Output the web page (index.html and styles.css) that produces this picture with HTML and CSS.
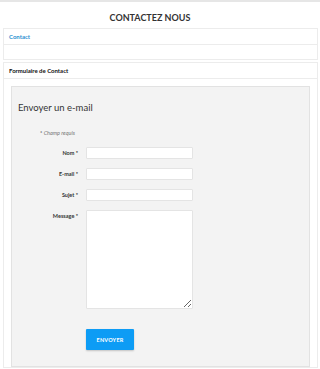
FILE: index.html
```html
<!DOCTYPE html>
<html lang="fr">
<head>
<meta charset="utf-8">
<title>Contactez nous</title>
<link rel="stylesheet" href="styles.css">
</head>
<body>
<div class="topbar"></div>
<h1 class="page-title">CONTACTEZ NOUS</h1>
<div class="panel">
  <div class="panel-head blue">Contact</div>
  <div class="panel-body empty"></div>
</div>
<div class="panel second">
  <div class="panel-head">Formulaire de Contact</div>
  <div class="panel-body">
    <div class="well">
      <h2 class="well-title">Envoyer un e-mail</h2>
      <p class="required"><span>*</span> Champ requis</p>
      <form class="form">
        <label class="lbl">Nom *</label>
        <input class="field" type="text">
        <label class="lbl">E-mail *</label>
        <input class="field" type="text">
        <label class="lbl">Sujet *</label>
        <input class="field" type="text">
        <label class="lbl">Message *</label>
        <textarea class="field area"></textarea>
        <span></span>
        <button class="btn" type="button">ENVOYER</button>
      </form>
    </div>
  </div>
</div>
</body>
</html>
```
FILE: styles.css
```css
html, body { margin: 0; padding: 0; background: #fff; }
body { font-family: Lato, "Open Sans", sans-serif; color: #333; overflow: hidden; height: 369px; }
.topbar { height: 2px; background: #e6e6e6; }
.page-title {
  margin: 0; padding: 10px 20px 0 0; height: 16px;
  text-align: center; font-size: 9px; font-weight: 700; color: #333; line-height: 12px;
}
.panel {
  margin: 0 2px 0 3px; border: 1px solid #ececec; background: #fff;
}
.panel.second { margin-top: 2px; }
.panel-head {
  height: 15px; line-height: 15px; padding-left: 5px;
  font-size: 6px; font-weight: 700; color: #111;
  border-bottom: 1px solid #ececec;
}
.panel-head.blue { color: #2a8fd0; }
.panel-body { padding: 7px 7px 0 7px; }
.panel-body.empty { height: 14px; padding: 0; }
.well {
  background: #f3f3f3; border: 1px solid #e2e2e2; height: 279px; padding: 0 6px;
}
.well-title { margin: 0; padding-top: 14px; font-size: 9.5px; font-weight: 400; line-height: 14px; color: #333; }
.required { margin: 14px 0 0 22px; font-size: 5.5px; font-style: italic; color: #777; line-height: 8px; }
.required span { font-style: normal; color: #333; }
.form {
  display: grid; grid-template-columns: 60px 107px; column-gap: 8px; row-gap: 9px;
  margin-top: 10px; align-items: start;
}
.lbl { text-align: right; font-size: 5.5px; font-weight: 700; color: #333; line-height: 12px; }
.field {
  box-sizing: border-box; height: 12px; margin: 0; padding: 0;
  border: 1px solid #e4e4e4; background: #fff; border-radius: 1px; outline: none;
}
.area { height: 99px; resize: both; display: block; }
.btn {
  margin-top: 11px; width: 48px; height: 21px; padding: 0;
  background: #0d9cf5; color: #fff; border: 0; border-radius: 1px;
  font-family: Lato, sans-serif; font-size: 5.5px; font-weight: 700; letter-spacing: 0.2px;
  box-shadow: 0 1px 2px rgba(0,0,0,0.2);
}
```
